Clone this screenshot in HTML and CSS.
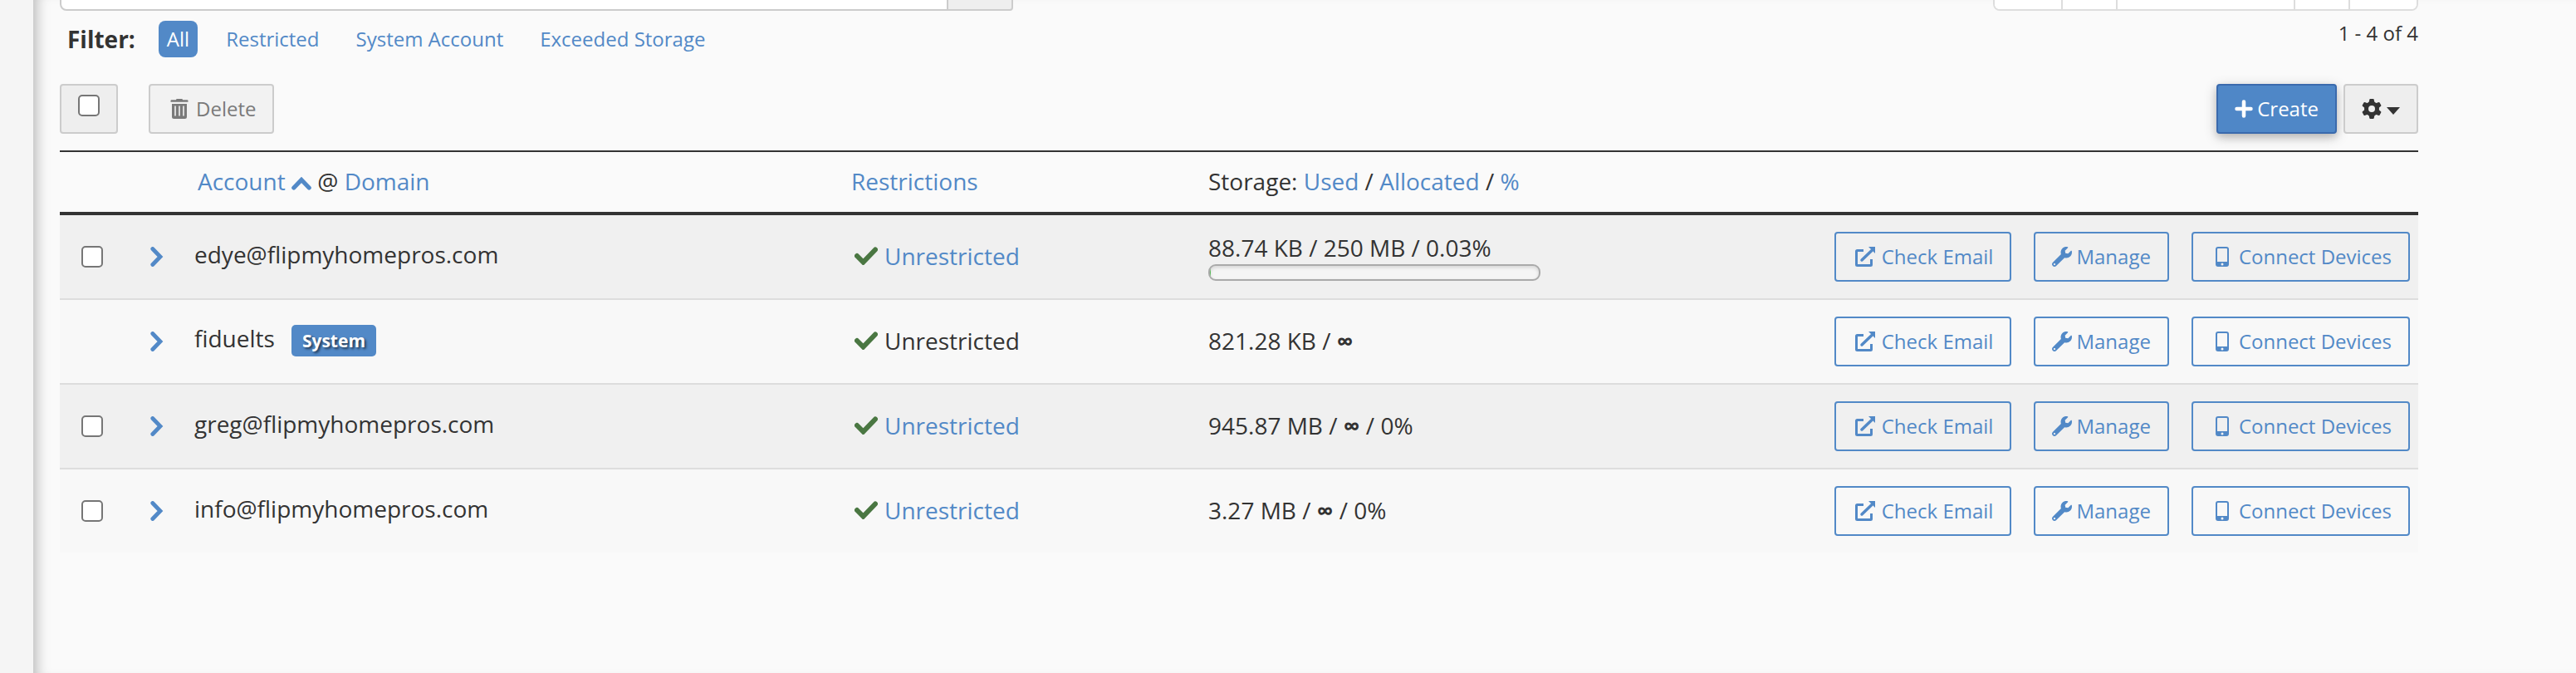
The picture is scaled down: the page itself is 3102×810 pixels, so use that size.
FILE: index.html
```html
<!DOCTYPE html>
<html lang="en">
<head>
  <meta charset="UTF-8">
  <title>Email Accounts</title>
  <meta name="viewport" content="width=device-width, initial-scale=1.0">
  <link rel="stylesheet" href="styles.css">
</head>
<body>
  <!-- Icon set -->
  <svg class="icon-defs" aria-hidden="true">
    <symbol id="i-trash" viewBox="0 0 22 24">
      <path fill="currentColor" fill-rule="evenodd" d="M7 1.2Q7 0 8.2 0h5.6Q15 0 15 1.2h5.5q1 0 1 1v1.6h-21V2.2q0-1 1-1zM2 6h18v15.5q0 2.5-2.5 2.5h-13Q2 24 2 21.500zM5.200 8.500v12h1.600v-12zm5 0v12h1.600v-12zm5 0v12h1.600v-12z"/>
    </symbol>
    <symbol id="i-plus" viewBox="0 0 22 22">
      <path d="M11 2.500v17M2.500 11h17" fill="none" stroke="currentColor" stroke-width="4.500" stroke-linecap="round"/>
    </symbol>
    <symbol id="i-gear" viewBox="0 0 24 24">
      <circle cx="12" cy="12" r="6.500" fill="none" stroke="currentColor" stroke-width="5"/>
      <g fill="currentColor">
        <path id="tooth" d="M8.500 5l.8-4.200Q9.500 0 10.300 0h3.400q.8 0 1 .8L15.500 5z"/>
        <use href="#tooth" transform="rotate(60 12 12)"/>
        <use href="#tooth" transform="rotate(120 12 12)"/>
        <use href="#tooth" transform="rotate(180 12 12)"/>
        <use href="#tooth" transform="rotate(240 12 12)"/>
        <use href="#tooth" transform="rotate(300 12 12)"/>
      </g>
    </symbol>
    <symbol id="i-up" viewBox="0 0 24 16">
      <path d="M2.800 13L12 3.500l9.200 9.500" fill="none" stroke="currentColor" stroke-width="5.200" stroke-linecap="round"/>
    </symbol>
    <symbol id="i-right" viewBox="0 0 16 24">
      <path d="M2.800 2.500L12 12l-9.200 9.500" fill="none" stroke="currentColor" stroke-width="4.800" stroke-linecap="round"/>
    </symbol>
    <symbol id="i-check" viewBox="0 0 28 22">
      <path d="M3 11l7.500 7.500L25 3.500" fill="none" stroke="currentColor" stroke-width="6" stroke-linecap="round"/>
    </symbol>
    <symbol id="i-external" viewBox="0 0 24 24">
      <path d="M10 4.500H2.500Q1.500 4.500 1.500 5.500v16q0 1 1 1h16q1 0 1-1V15" fill="none" stroke="currentColor" stroke-width="3"/>
      <path d="M8 16L20 4.500" fill="none" stroke="currentColor" stroke-width="3.500" stroke-linecap="round"/>
      <path d="M16 0h8v8z" fill="currentColor"/>
    </symbol>
    <symbol id="i-wrench" viewBox="0 0 512 512">
      <path fill="currentColor" d="M507.730 109.100c-2.240-9.030-13.540-12.090-20.120-5.510l-74.360 74.360-67.880-11.310-11.310-67.880 74.360-74.360c6.620-6.620 3.430-17.900-5.660-20.160-47.380-11.740-99.550.91-136.580 37.930-39.640 39.640-50.550 97.100-34.050 147.200L18.740 402.760c-24.990 24.990-24.990 65.510 0 90.500 24.990 24.990 65.510 24.990 90.500 0l213.210-213.210c50.120 16.710 107.470 5.680 147.370-34.220 37.070-37.070 49.700-89.320 37.910-136.730zM64 472c-13.250 0-24-10.750-24-24 0-13.260 10.750-24 24-24s24 10.740 24 24c0 13.250-10.750 24-24 24z"/>
    </symbol>
    <symbol id="i-phone" viewBox="0 0 16 24">
      <path fill="currentColor" fill-rule="evenodd" d="M3 0h10q3 0 3 3v18q0 3-3 3H3q-3 0-3-3V3q0-3 3-3zM3 2q-1 0-1 1v15h12V3q0-1-1-1zM8 19.500a1.500 1.500 0 1 0 0 3a1.500 1.500 0 1 0 0-3z"/>
    </symbol>
  </svg>

  <div class="layout">
    <aside class="sidebar"></aside>
    <main class="content">
      <div class="top-bar">
        <div class="search">
          <input type="text" class="search-input" aria-label="Search">
          <button class="search-btn" aria-label="Search"></button>
        </div>
        <div class="pagination">
          <button aria-label="First page"></button>
          <button aria-label="Previous page"></button>
          <button class="page-current" aria-label="Current page"></button>
          <button aria-label="Next page"></button>
          <button aria-label="Last page"></button>
        </div>
      </div>

      <div class="filter-bar">
        <div class="filters">
          <span class="filter-label">Filter:</span>
          <a href="#" class="filter active">All</a>
          <a href="#" class="filter">Restricted</a>
          <a href="#" class="filter">System Account</a>
          <a href="#" class="filter">Exceeded Storage</a>
        </div>
        <div class="page-info">1 - 4 of 4</div>
      </div>

      <div class="actions-bar">
        <label class="btn select-all"><input type="checkbox" aria-label="Select all"></label>
        <button class="btn btn-delete" disabled><span class="icon-box"><svg class="icon-trash"><use href="#i-trash"/></svg></span>Delete</button>
        <button class="btn btn-primary"><svg class="icon-plus"><use href="#i-plus"/></svg>Create</button>
        <button class="btn btn-gear" aria-label="Settings"><svg class="icon"><use href="#i-gear"/></svg><span class="caret"></span></button>
      </div>

      <table class="accounts">
        <colgroup>
          <col class="col-check">
          <col class="col-expand">
          <col>
          <col class="col-restrictions">
          <col class="col-storage">
          <col class="col-actions">
        </colgroup>
        <thead>
          <tr>
            <th></th>
            <th></th>
            <th class="account-head"><a href="#">Account <svg class="icon-up"><use href="#i-up"/></svg></a> @ <a href="#">Domain</a></th>
            <th><a href="#">Restrictions</a></th>
            <th>Storage: <a href="#">Used</a> / <a href="#">Allocated</a> / <a href="#">%</a></th>
            <th></th>
          </tr>
        </thead>
        <tbody>
          <tr>
            <td class="check"><input type="checkbox" aria-label="Select edye@flipmyhomepros.com"></td>
            <td><button class="expand" aria-label="Expand"><svg class="icon-right"><use href="#i-right"/></svg></button></td>
            <td class="account">edye@flipmyhomepros.com</td>
            <td><div class="restriction"><svg class="icon-check"><use href="#i-check"/></svg><a href="#">Unrestricted</a></div></td>
            <td class="storage">88.74 KB / 250 MB / 0.03%<div class="progress"><div class="progress-bar" style="width:0.03%"></div></div></td>
            <td>
              <div class="row-actions">
                <button class="btn btn-outline"><span class="icon-box"><svg class="icon"><use href="#i-external"/></svg></span>Check Email</button>
                <button class="btn btn-outline"><svg class="icon"><use href="#i-wrench"/></svg>Manage</button>
                <button class="btn btn-outline"><span class="icon-box"><svg class="icon-phone"><use href="#i-phone"/></svg></span>Connect Devices</button>
              </div>
            </td>
          </tr>
          <tr>
            <td class="check"></td>
            <td><button class="expand" aria-label="Expand"><svg class="icon-right"><use href="#i-right"/></svg></button></td>
            <td class="account">fiduelts<span class="badge">System</span></td>
            <td><div class="restriction"><svg class="icon-check"><use href="#i-check"/></svg><span>Unrestricted</span></div></td>
            <td class="storage">821.28 KB / <b>∞</b></td>
            <td>
              <div class="row-actions">
                <button class="btn btn-outline"><span class="icon-box"><svg class="icon"><use href="#i-external"/></svg></span>Check Email</button>
                <button class="btn btn-outline"><svg class="icon"><use href="#i-wrench"/></svg>Manage</button>
                <button class="btn btn-outline"><span class="icon-box"><svg class="icon-phone"><use href="#i-phone"/></svg></span>Connect Devices</button>
              </div>
            </td>
          </tr>
          <tr>
            <td class="check"><input type="checkbox" aria-label="Select greg@flipmyhomepros.com"></td>
            <td><button class="expand" aria-label="Expand"><svg class="icon-right"><use href="#i-right"/></svg></button></td>
            <td class="account">greg@flipmyhomepros.com</td>
            <td><div class="restriction"><svg class="icon-check"><use href="#i-check"/></svg><a href="#">Unrestricted</a></div></td>
            <td class="storage">945.87 MB / <b>∞</b> / 0%</td>
            <td>
              <div class="row-actions">
                <button class="btn btn-outline"><span class="icon-box"><svg class="icon"><use href="#i-external"/></svg></span>Check Email</button>
                <button class="btn btn-outline"><svg class="icon"><use href="#i-wrench"/></svg>Manage</button>
                <button class="btn btn-outline"><span class="icon-box"><svg class="icon-phone"><use href="#i-phone"/></svg></span>Connect Devices</button>
              </div>
            </td>
          </tr>
          <tr>
            <td class="check"><input type="checkbox" aria-label="Select info@flipmyhomepros.com"></td>
            <td><button class="expand" aria-label="Expand"><svg class="icon-right"><use href="#i-right"/></svg></button></td>
            <td class="account">info@flipmyhomepros.com</td>
            <td><div class="restriction"><svg class="icon-check"><use href="#i-check"/></svg><a href="#">Unrestricted</a></div></td>
            <td class="storage">3.27 MB / <b>∞</b> / 0%</td>
            <td>
              <div class="row-actions">
                <button class="btn btn-outline"><span class="icon-box"><svg class="icon"><use href="#i-external"/></svg></span>Check Email</button>
                <button class="btn btn-outline"><svg class="icon"><use href="#i-wrench"/></svg>Manage</button>
                <button class="btn btn-outline"><span class="icon-box"><svg class="icon-phone"><use href="#i-phone"/></svg></span>Connect Devices</button>
              </div>
            </td>
          </tr>
        </tbody>
      </table>
    </main>
  </div>
</body>
</html>
```

FILE: styles.css
```css
* { box-sizing: border-box; }
body {
  margin: 0; background: #fafafa; color: #333;
  font-family: "Open Sans", "Noto Sans", sans-serif; font-size: 28px; line-height: 40px;
}
a { color: #5289c7; text-decoration: none; }
button, input { font: inherit; margin: 0; }
svg { display: block; flex: none; }
.icon-defs { position: absolute; width: 0; height: 0; }

.layout { display: flex; min-height: 100vh; overflow: hidden; }
.sidebar { flex: none; width: 40px; background: #f5f5f5; }
.content {
  flex: 1; min-width: 0; padding: 0 190px 0 32px;
  box-shadow: inset 16px 0 16px -12px #0004;
}

/* Search and pagination, scrolled mostly out of view */
.top-bar { display: flex; justify-content: space-between; margin-top: -47px; }
.search { display: flex; flex: 0 1 1148px; height: 60px; }
.search-input { flex: 1; min-width: 0; border: 2px solid #ccc; border-radius: 8px 0 0 8px; background: #fff; }
.search-btn { width: 80px; margin-left: -2px; border: 2px solid #ccc; border-radius: 0 4px 4px 0; background: #eee; }
.pagination { display: flex; height: 60px; border: 2px solid #ddd; border-radius: 8px; background: #fff; overflow: hidden; }
.pagination button { width: 66px; border: 0; border-left: 2px solid #ddd; background: #fff; }
.pagination button:first-child { width: 80px; border-left: 0; }
.pagination button:last-child { width: 82px; }
.pagination .page-current { width: 214px; }

.filter-bar { display: flex; justify-content: space-between; margin-top: 12px; font-size: 24px; }
.filters { display: flex; align-items: center; gap: 24px; padding-left: 9px; }
.filter-label { font-size: 28px; font-weight: 700; }
.filter { padding: 2px 10px; border-radius: 8px; }
.filter.active { background: #5289c7; color: #fff; }
.filter-label + .filter { margin-left: 4px; }
.page-info { line-height: 30px; }

.actions-bar { display: flex; margin: 32px 0 20px; }
.btn {
  display: inline-flex; align-items: center; gap: 5px; height: 60px; padding: 0 20px;
  border: 2px solid #ccc; border-radius: 4px; background: #eee; color: #333;
  font-size: 24px; white-space: nowrap;
}
.icon-box { display: flex; justify-content: center; width: 30px; }
.icon { width: 24px; height: 24px; }
.icon-trash { width: 22px; height: 24px; }
.icon-plus { width: 22px; height: 22px; }
.icon-phone { width: 16px; height: 24px; }
.select-all { align-items: flex-start; padding-top: 11px; margin-right: 37px; }
.btn-delete { background: #f2f2f2; color: #7a7a7a; }
.btn-primary {
  margin-left: auto; margin-right: 8px;
  background: #4f87c7; border-color: #3a6aad; color: #fff;
  box-shadow: 0 4px 16px #0003, 0 4px 8px #0002;
}
.btn-gear { gap: 6px; }
.caret { border: 8px solid transparent; border-top: 9px solid #333; border-bottom: 0; margin-top: 5px; }

input[type="checkbox"] {
  appearance: none; display: block; width: 26px; height: 26px;
  border: 2px solid #767676; border-radius: 5px; background: #fff;
}

.accounts { width: 100%; table-layout: fixed; border-collapse: separate; border-spacing: 0; }
.col-check { width: 90px; }
.col-expand { width: 62px; }
.col-restrictions { width: 430px; }
.col-storage { width: 620px; }
.col-actions { width: 847px; }
.accounts th {
  height: 78px; padding: 0 10px 2px; text-align: left; font-weight: 400;
  border-top: 2px solid #333; border-bottom: 4px solid #333;
}
.accounts td { height: 102px; padding: 0 10px; vertical-align: middle; border-bottom: 2px solid #ddd; background: #f8f8f8; }
.accounts tr:nth-child(odd) td { background: #f0f0f0; }
.accounts tr:last-child td { height: 100px; border-bottom: 0; }
.accounts .account-head { padding-left: 14px; }
.accounts .check { padding-left: 26px; }
.accounts .account { padding-bottom: 6px; }
.accounts .storage { padding-bottom: 2px; }
.icon-up { display: inline-block; width: 24px; height: 16px; }

.expand { display: block; padding: 0 9px; border: 0; background: none; color: #5289c7; }
.icon-right { width: 16px; height: 24px; }
.badge {
  display: inline-block; margin-left: 20px; padding: 0 13px; border-radius: 5px; background: #5289c7; color: #fff;
  font-size: 21px; line-height: 38px; font-weight: 700; text-shadow: 2px 2px 3px #0009;
}
.restriction { display: flex; align-items: center; gap: 8px; padding: 0 0 2px 4px; }
.icon-check { width: 28px; height: 22px; color: #4a7742; }
.progress {
  width: 400px; height: 20px; border: 2px solid #aaa; border-radius: 9px; background: #f5f5f5;
  overflow: hidden; box-shadow: inset 0 2px 4px #0002;
}
.progress-bar { height: 100%; min-width: 1px; background: #5cb85c; }

.row-actions { display: flex; justify-content: flex-end; gap: 27px; }
.btn-outline { border-color: #5289c7; background: transparent; color: #5289c7; }
```
